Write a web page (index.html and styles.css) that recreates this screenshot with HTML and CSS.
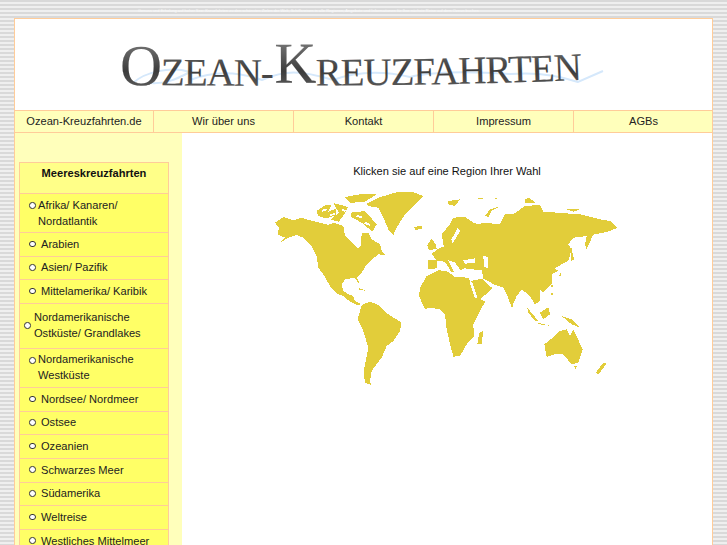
FILE: index.html
```html
<!DOCTYPE html>
<html lang="de">
  <head>
    <meta charset="utf-8">
    <title>Ozean-Kreuzfahrten</title>
    <link rel="stylesheet" href="styles.css">
  </head>
  <body>
    <p class="seo">Genuss und Erholung auf hoher See: Kreuzfahrten zu den schönsten Zielen der Welt, Schiffsreisen in alle Regionen, Angebote und Informationen für Ihre nächste Reise auf dem Ozean buchen</p>
    <div class="frame">
      <header class="logo">
        <svg class="logo-art" width="697" height="91" viewBox="15 19 697 91">
          <defs>
            <linearGradient id="steel" x1="0" y1="0" x2="0" y2="1">
              <stop offset="0" stop-color="#8c8c8c"/>
              <stop offset="0.6" stop-color="#3c3c3c"/>
              <stop offset="1" stop-color="#6c6c6c"/>
            </linearGradient>
            <path id="arc" d="M120 85 C 240 86 420 87 580 80"/>
          </defs>
          <path class="swoosh" d="M133 83 C145 72 170 66 190 72 C175 80 165 84 150 83 M190 80 C215 70 240 72 262 80 C285 70 300 70 333 80 C355 72 380 70 410 77 C440 70 480 72 510 74 C535 72 555 74 578 82 L603 71"/>
          <text class="logo-text" fill="url(#steel)"><textPath href="#arc"><tspan class="cap">O</tspan>ZEAN-<tspan class="cap" dx="2" dy="-3">K</tspan><tspan dy="3">REUZFAHRTEN</tspan></textPath></text>
        </svg>
      </header>
      <nav class="nav">
        <a class="nav-item" href="#">Ozean-Kreuzfahrten.de</a>
        <a class="nav-item" href="#">Wir über uns</a>
        <a class="nav-item" href="#">Kontakt</a>
        <a class="nav-item" href="#">Impressum</a>
        <a class="nav-item" href="#">AGBs</a>
      </nav>
      <div class="content">
        <aside class="sidebar">
          <h2 class="menu-title">Meereskreuzfahrten</h2>
          <ul class="menu">
            <li class="item two tight"><a href="#">Afrika/ Kanaren/<br>Nordatlantik</a></li>
            <li class="item"><a href="#">Arabien</a></li>
            <li class="item"><a href="#">Asien/ Pazifik</a></li>
            <li class="item"><a href="#">Mittelamerika/ Karibik</a></li>
            <li class="item two wide"><a href="#">Nordamerikanische<br>Ostküste/ Grandlakes</a></li>
            <li class="item two tight"><a href="#">Nordamerikanische<br>Westküste</a></li>
            <li class="item"><a href="#">Nordsee/ Nordmeer</a></li>
            <li class="item"><a href="#">Ostsee</a></li>
            <li class="item"><a href="#">Ozeanien</a></li>
            <li class="item"><a href="#">Schwarzes Meer</a></li>
            <li class="item"><a href="#">Südamerika</a></li>
            <li class="item"><a href="#">Weltreise</a></li>
            <li class="item"><a href="#">Westliches Mittelmeer</a></li>
          </ul>
        </aside>
        <main class="main">
          <p class="intro">Klicken sie auf eine Region Ihrer Wahl</p>
          <svg class="map" width="350" height="205" viewBox="272 187 350 205" shape-rendering="crispEdges">
            <g class="land" transform="translate(265 180) scale(.3333)">
              <path d="M30 125 L55 108 L85 118 L110 110 L135 118 L165 125 L190 132 L205 125 L235 135 L240 165 L265 190 L280 203 L288 195 L290 155 L310 155 L320 175 L345 190 L350 210 L362 222 L340 220 L322 235 L305 250 L290 275 L276 290 L285 312 L268 290 L240 295 L230 310 L235 330 L250 340 L265 345 L270 360 L290 370 L275 372 L255 362 L235 345 L215 338 L195 315 L178 285 L160 260 L155 225 L140 195 L115 170 L95 162 L70 170 L45 185 L60 170 L38 160 L42 140Z"/>
              <path d="M155 90 L182 72 L200 72 L190 92 L212 84 L212 104 L182 112 L160 105Z"/>
              <path d="M205 66 L250 78 L240 96 L222 122 L196 116 L222 96Z"/>
              <path d="M240 48 L285 40 L335 40 L300 62 L255 66Z"/>
              <path d="M258 95 L300 90 L335 130 L322 152 L290 125 L258 108Z"/>
              <path d="M305 68 L340 50 L400 32 L440 32 L475 45 L450 70 L420 100 L395 140 L385 162 L370 145 L355 110 L340 80 L310 75Z"/>
              <path d="M445 138 L472 134 L470 145 L452 146Z"/>
              <path d="M290 372 L315 362 L340 372 L370 400 L410 425 L405 450 L385 480 L365 495 L350 530 L320 570 L315 600 L318 612 L300 605 L296 570 L310 500 L295 450 L278 415Z"/>
              <path d="M283 322 L305 330 L283 326Z"/>
              <path d="M487 192 L500 172 L512 190 L515 203 L492 208Z"/>
            </g>
            <g class="sea" transform="translate(265 180) scale(.3333)">
              <path d="M170 86 L186 84 L184 90 L170 92Z M196 100 L210 96 L210 101 L196 105Z M232 84 L246 88 L240 92 L230 90Z M275 102 L292 106 L290 111 L274 108Z M300 122 L316 130 L314 135 L298 128Z"/>
            </g>
            <g class="land" transform="translate(440 180) scale(.3333)">
              <path d="M-63 345 L-60 320 L-40 285 L-5 268 L20 270 L45 288 L85 290 L110 350 L135 362 L118 395 L100 430 L102 465 L80 490 L60 525 L40 527 L28 480 L20 445 L15 400 L0 385 L-30 380 L-45 385Z"/>
              <path d="M-37 238 L-12 236 L-25 218 L0 200 L15 196 L10 190 L5 160 L30 130 L40 110 L75 108 L100 125 L115 130 L130 125 L180 130 L195 100 L220 100 L255 75 L300 72 L310 92 L350 95 L420 100 L480 115 L510 120 L533 140 L510 150 L490 155 L440 165 L400 170 L385 190 L395 205 L385 240 L365 250 L345 262 L355 270 L335 280 L335 310 L310 335 L300 325 L300 360 L285 370 L270 345 L245 325 L230 345 L215 378 L200 340 L190 320 L165 312 L130 292 L125 268 L72 262 L62 268 L45 245 L25 238 L42 272 L35 275 L15 242 L-8 240 L-8 262 L-37 264Z"/>
              <path d="M92 300 L130 292 L158 322 L120 355 L110 350Z"/>
              <path d="M118 455 L130 450 L125 490 L112 490Z"/>
              <path d="M262 380 L295 420 L285 420 L265 395Z"/>
              <path d="M290 425 L335 435 L300 430Z"/>
              <path d="M300 395 L325 378 L330 400 L310 415Z"/>
              <path d="M332 338 L340 335 L336 345Z M332 312 L340 310 L336 322Z"/>
              <path d="M365 405 L395 415 L420 440 L395 430Z"/>
              <path d="M313 490 L345 465 L360 450 L380 445 L390 465 L400 445 L428 505 L415 545 L395 550 L370 520 L345 520 L320 528Z"/>
              <path d="M400 555 L410 555 L408 565Z"/>
              <path d="M490 545 L500 548 L475 580 L467 575Z"/>
              <path d="M393 195 L402 235 L392 240Z M360 270 L365 285 L358 285Z"/>
              <path d="M440 165 L460 160 L440 205 L435 190Z"/>
              <path d="M212 368 L220 370 L218 380Z"/>
              <path d="M25 60 L60 55 L45 75 L25 70Z"/>
              <path d="M135 105 L150 85 L185 75 L155 88 L145 108Z"/>
              <path d="M255 55 L268 50 L285 65 L255 65Z"/>
              <path d="M112 52 L132 52 L122 55Z M160 50 L175 50 L168 54Z M380 85 L420 85 L400 92Z"/>
            </g>
            <g class="sea" transform="translate(440 180) scale(.3333)">
              <path d="M70 238 L105 232 L105 246 L75 248Z"/>
              <path d="M130 225 L143 228 L145 262 L132 258Z"/>
              <path d="M52 142 L60 150 L38 188 L34 176Z"/>
              <path d="M88 302 L96 302 L112 350 L104 350Z"/>
              <path d="M125 292 L135 294 L158 318 L150 318Z"/>
            </g>
          </svg>
        </main>
      </div>
    </div>
  </body>
</html>
```

FILE: styles.css
```css
html, body { height: 545px; margin: 0; overflow: hidden }
body {
  padding: 0 14px;
  background: repeating-linear-gradient(#d9d9d9 0 2px, #efefef 2px 4px);
  font-family: "Liberation Sans", Arial, sans-serif;
  font-size: 11.1px;
  color: #222;
}
a { color: inherit; text-decoration: none }

.seo { height: 18px; margin: 0; padding-left: 124px; font-size: 4px; line-height: 22px; color: #fafafa; white-space: nowrap; overflow: hidden }

.frame { display: flex; flex-direction: column; width: 697px; border: 1px solid #ffcc99; background: white }

.logo { height: 91px }
.logo-art { display: block }
.swoosh { fill: none; stroke: #d5e8fb; stroke-width: 2 }
.logo-text { font-family: "Liberation Serif", serif; font-size: 39px; letter-spacing: -1px; stroke: #555; stroke-width: .15px }
.cap { font-size: 58px }

.nav { display: flex; height: 21px; border-top: 1px solid #ffcc99; border-bottom: 1px solid #ffcc99; background: #ffffbb }
.nav-item { flex: 0 0 139px; border-left: 1px solid #ffcc99; text-align: center; line-height: 20px }
.nav-item:first-child { flex-basis: 138px; border-left: 0 }

.content { display: flex }
.sidebar { flex: 0 0 150px; padding: 29px 13px 0 4px; background: #ffffbb }
.menu-title { height: 30px; margin: 0; border: 1px solid #ffcc99; background: #ffff88; font-size: 11.1px; line-height: 20px; text-align: center; color: #111 }
.menu { margin: 0; padding: 0; list-style: none; border-left: 1px solid #ffcc99; border-right: 1px solid #ffcc99; background: #ffff66 }
.item { display: flex; align-items: center; height: 21.67px; padding: 0 0 1px 9px; border-bottom: 1px solid #ffcc99; line-height: 16px }
.item::before { content: ""; flex: none; width: 4.6px; height: 4.6px; margin-right: 5.4px; border: 1px solid #333; border-radius: 50%; background: white }
.two { height: 37px }
.tight::before { align-self: flex-start; margin: 8px 2.4px 0 0 }
.wide { height: 43px; padding-left: 4px }
.wide::before { margin-right: 3.4px }

.main { flex: 1; display: flex; flex-direction: column; align-items: center }
.intro { margin: 30px 0 0; line-height: 16px; color: #111 }
.map { display: block; margin-top: 9px }
.land path { fill: #e2cd3a }
.sea path { fill: white }
```
